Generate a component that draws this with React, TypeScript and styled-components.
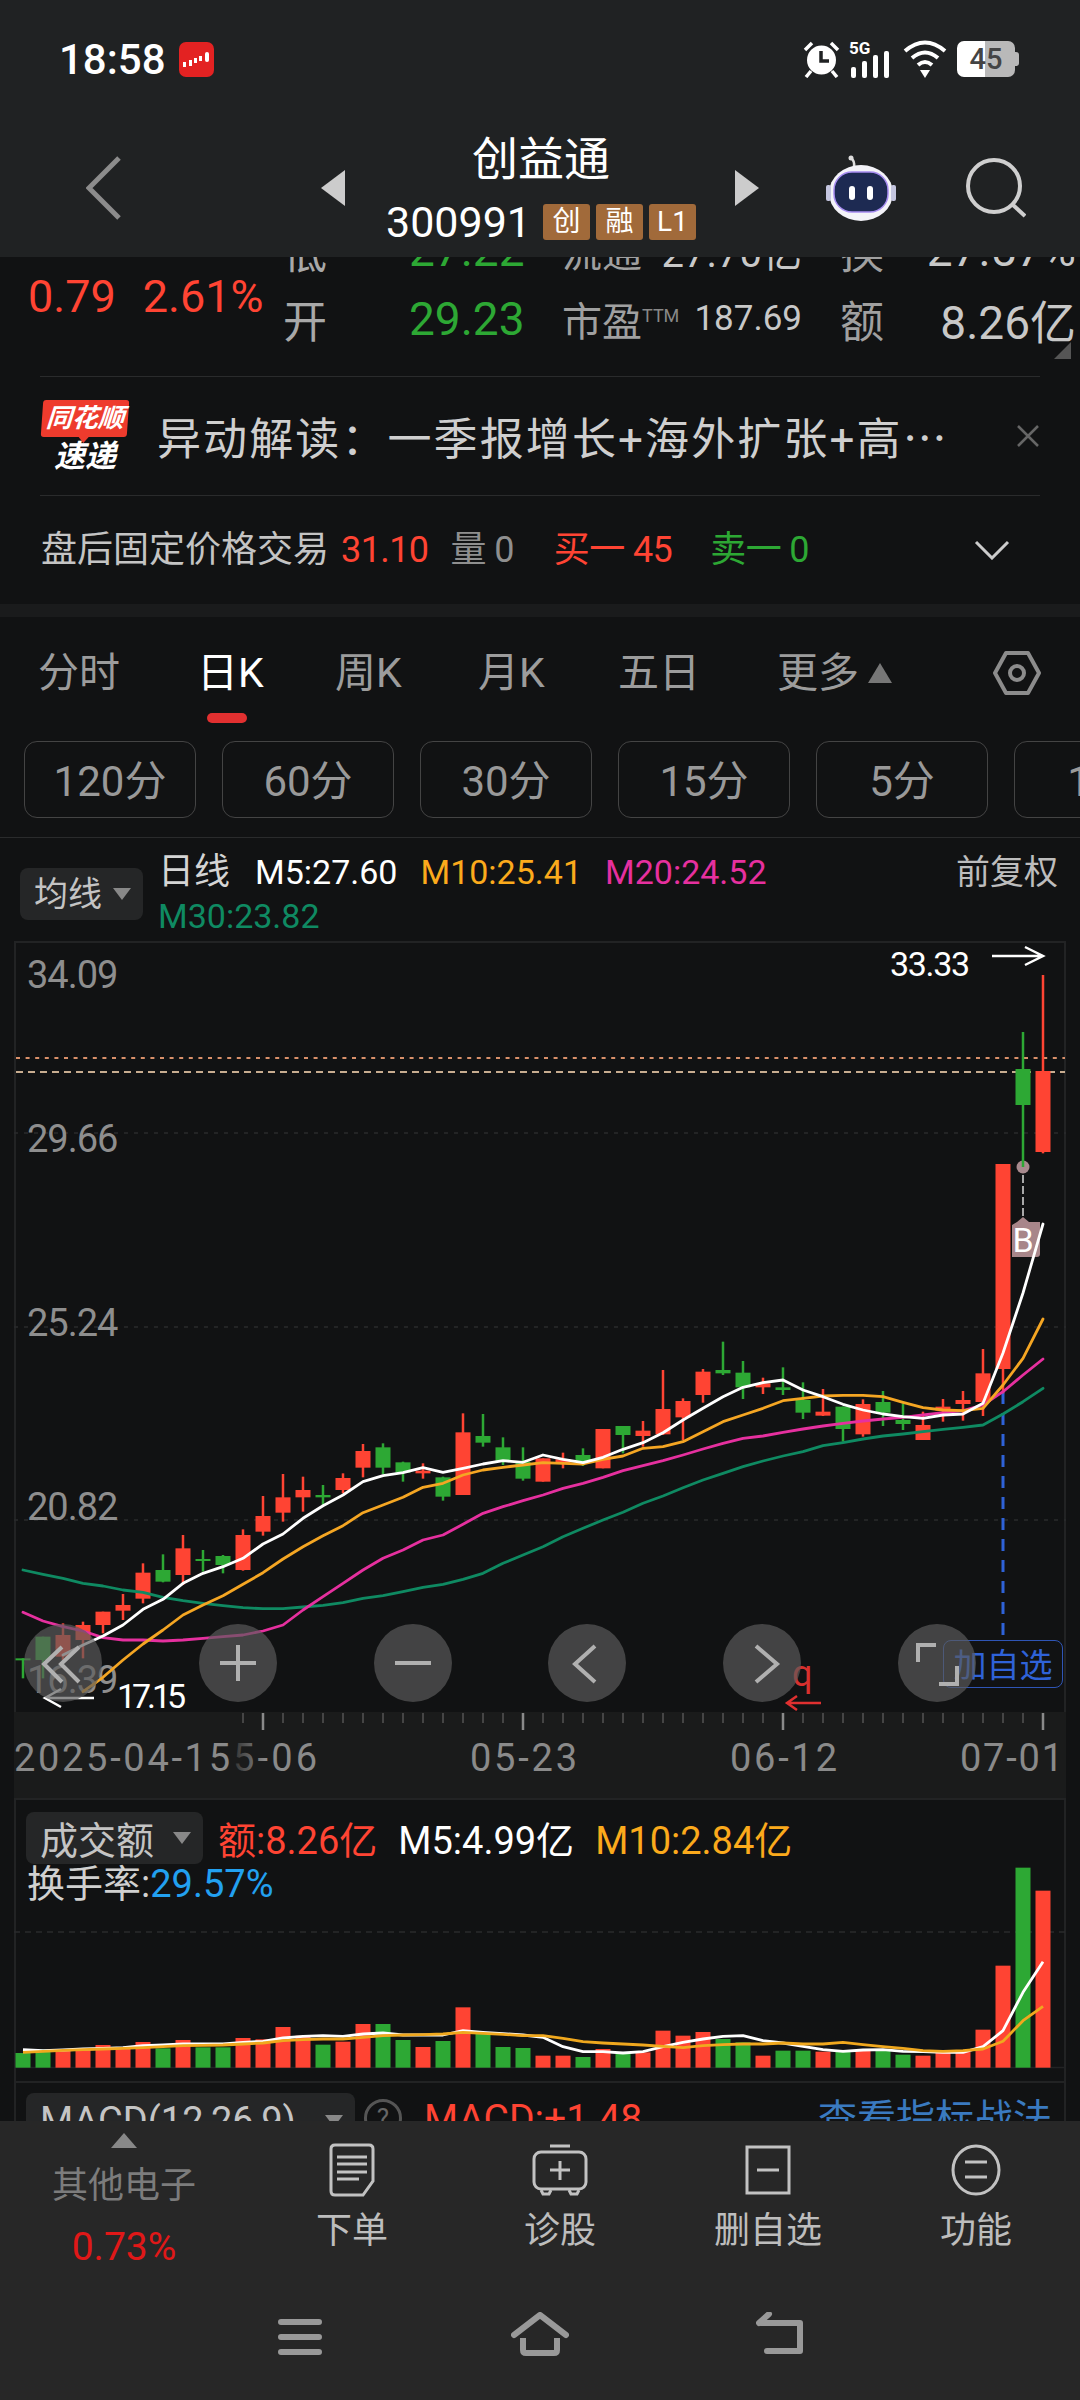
import React from "react";
import styled, { createGlobalStyle } from "styled-components";

const FONT = `Roboto, "Noto Sans CJK SC", sans-serif`;
const RED = "#ff4433";
const GREEN = "#2da834";
const ORANGE = "#fbaa1c";
const PINK = "#e6309f";
const TEAL = "#0f8a62";

const GlobalStyle = createGlobalStyle`
  html, body {
    margin: 0;
    width: 1080px;
    height: 2400px;
    background: #111213;
    font-family: ${FONT};
    color: #ccc;
  }
  * { box-sizing: border-box; }
`;

const Page = styled.div`
  width: 1080px;
  height: 2400px;
  display: flex;
  flex-direction: column;
  overflow: hidden;
`;

/* ---- header ---- */
const Header = styled.header`
  height: 257px;
  flex-shrink: 0;
  background: #202223;
  position: relative;
  z-index: 2;
`;
const StatusBar = styled.div`
  height: 118px;
  display: flex;
  align-items: center;
  padding: 0 61px 0 59px;
`;
const Clock = styled.span`
  font-size: 42px;
  font-weight: 500;
  color: #fff;
  width: 120px;
`;
const StatusIcons = styled.div`
  margin-left: auto;
  display: flex;
  align-items: center;
`;
const Battery = styled.div`
  position: relative;
  width: 58px;
  height: 36px;
  margin-left: 10px;
  margin-right: 4px;
  border-radius: 7px;
  background: linear-gradient(90deg, #fff 0 48%, #b9b9b9 48% 100%);
  color: #444;
  font-size: 29px;
  font-weight: 500;
  line-height: 36px;
  text-align: center;
  &::after {
    content: "";
    position: absolute;
    right: -4px;
    top: 11px;
    width: 4px;
    height: 14px;
    border-radius: 0 3px 3px 0;
    background: #b9b9b9;
  }
`;
const NavRow = styled.div`
  height: 139px;
  display: flex;
  align-items: center;
  padding-left: 86px;
`;
const StockSwitch = styled.span<{ $dir: "left" | "right"; $gap: number }>`
  width: 0;
  height: 0;
  margin-left: ${(p) => p.$gap}px;
  border-top: 18px solid transparent;
  border-bottom: 18px solid transparent;
  ${(p) =>
    p.$dir === "left"
      ? "border-right: 24px solid #ccc;"
      : "border-left: 24px solid #ccc;"}
`;
const StockName = styled.div`
  width: 308px;
  margin-left: 42px;
  padding-top: 5px;
  display: flex;
  flex-direction: column;
  align-items: center;
`;
const StockTitle = styled.div`
  font-size: 46px;
  line-height: 50px;
  color: #fff;
`;
const CodeRow = styled.div`
  margin-top: 14px;
  display: flex;
  align-items: center;
  gap: 6px;
`;
const StockCode = styled.span`
  font-size: 43px;
  line-height: 48px;
  color: #fff;
  margin-right: 6px;
`;
const StockTag = styled.span`
  width: 47px;
  height: 36px;
  border-radius: 3px;
  background: #a16a3a;
  color: #fff;
  font-size: 28px;
  line-height: 36px;
  text-align: center;
`;

/* ---- scroll area ---- */
const Main = styled.main`
  height: 1864px;
  flex-shrink: 0;
  overflow: hidden;
`;
const Quote = styled.section`
  margin-top: -42px;
  height: 161px;
  position: relative;
  display: flex;
  padding-left: 28px;
  &::after {
    content: "";
    position: absolute;
    right: 9px;
    bottom: 17px;
    border-left: 17px solid transparent;
    border-bottom: 17px solid #555;
  }
`;
const Change = styled.div`
  width: 255px;
  padding-top: 58px;
  display: flex;
  gap: 27px;
  font-size: 45px;
  line-height: 48px;
  color: ${RED};
`;
const QuoteGrid = styled.div`
  display: grid;
  grid-template-columns: 126px 153px 278px 240px;
  grid-auto-rows: 69px;
`;
const QuoteCell = styled.div<{ $pad?: number }>`
  display: flex;
  justify-content: space-between;
  align-items: center;
  padding-right: ${(p) => p.$pad ?? 0}px;
  font-size: 44px;
  color: #a8a8a8;
`;
const QuoteLabel = styled.span<{ $size?: number }>`
  font-size: ${(p) => p.$size ?? 40}px;
  color: #a0a0a0;
  sup {
    font-size: 18px;
    vertical-align: 14px;
    line-height: 0;
    color: #888;
  }
`;
const QuoteValue = styled.span<{ $color?: string; $size?: number }>`
  font-size: ${(p) => p.$size ?? 46}px;
  color: ${(p) => p.$color ?? "#c8c8c8"};
`;
const Banner = styled.div`
  margin: 0 40px;
  height: 120px;
  border-top: 1.5px solid #2a2b2c;
  border-bottom: 1.5px solid #2a2b2c;
  display: flex;
  align-items: center;
`;
const Logo = styled.div`
  width: 88px;
  margin-left: 1px;
  flex-shrink: 0;
  display: flex;
  flex-direction: column;
  align-items: center;
  color: #fff;
  font-style: italic;
  font-weight: 700;
`;
const LogoTag = styled.div`
  position: relative;
  width: 86px;
  height: 37px;
  border-radius: 3px;
  background: #ee3b2d;
  transform: skewX(-4deg);
  font-size: 26px;
  line-height: 37px;
  text-align: center;
  &::after {
    content: "";
    position: absolute;
    left: 38px;
    bottom: -6px;
    border-left: 5px solid transparent;
    border-right: 5px solid transparent;
    border-top: 6px solid #ee3b2d;
  }
`;
const LogoWord = styled.div`
  margin-top: 5px;
  font-size: 31px;
  line-height: 30px;
`;
const BannerText = styled.div`
  margin-left: 28px;
  flex: 1;
  font-size: 44px;
  letter-spacing: 2.1px;
  color: #cfcfcf;
  white-space: nowrap;
  span {
    font-family: "Noto Sans CJK SC", sans-serif;
    letter-spacing: -8px;
  }
`;
const AfterHours = styled.div`
  height: 108px;
  display: flex;
  align-items: center;
  padding: 0 70px 0 41px;
  font-size: 36px;
  line-height: 44px;
  color: #c4c4c4;
`;
const AfterValue = styled.span<{ $color?: string; $gap?: number }>`
  margin-left: ${(p) => p.$gap ?? 0}px;
  letter-spacing: -0.6px;
  color: ${(p) => p.$color ?? "#8f8f8f"};
`;
const Band = styled.div`
  height: 13px;
  background: #1a1b1c;
`;
const Tabs = styled.nav`
  height: 124px;
  display: flex;
  align-items: center;
  padding: 0 39px 12px 38px;
`;
const Tab = styled.span<{ $active?: boolean; $width: number }>`
  position: relative;
  width: ${(p) => p.$width}px;
  font-size: 41px;
  line-height: 50px;
  color: ${(p) => (p.$active ? "#fff" : "#9c9c9c")};
  &::after {
    content: "";
    display: ${(p) => (p.$active ? "block" : "none")};
    position: absolute;
    left: 10px;
    top: 65px;
    width: 40px;
    height: 10px;
    border-radius: 5px;
    background: #e23030;
  }
`;
const MoreArrow = styled.span`
  margin-left: 9px;
  border-left: 12px solid transparent;
  border-right: 12px solid transparent;
  border-bottom: 20px solid #777;
`;
const Periods = styled.div`
  display: flex;
  gap: 26px;
  padding-left: 24px;
  height: 77px;
  overflow: hidden;
`;
const Period = styled.span`
  flex-shrink: 0;
  width: 172px;
  height: 77px;
  border: 1.5px solid #444;
  border-radius: 13px;
  font-size: 42px;
  line-height: 79px;
  text-align: center;
  color: #999;
`;
const Legend = styled.div`
  margin-top: 19px;
  height: 104px;
  border-top: 1.5px solid #2a2b2c;
  padding: 12px 22px 0 20px;
  display: grid;
  grid-template-columns: 138px 1fr auto;
  grid-auto-rows: 44px;
  font-size: 34px;
  line-height: 44px;
`;
const Dropdown = styled.div<{ $size: number; $width: number; $height?: number }>`
  width: ${(p) => p.$width}px;
  height: ${(p) => p.$height ?? p.$size + 18}px;
  display: flex;
  align-items: center;
  justify-content: space-between;
  padding: 0 12px 0 14px;
  border-radius: 8px;
  background: #252627;
  font-size: ${(p) => p.$size}px;
  color: #c4c4c4;
  flex-shrink: 0;
  &::after {
    content: "";
    border-left: 9px solid transparent;
    border-right: 9px solid transparent;
    border-top: 12px solid #888;
  }
`;
const LegendDropdown = styled(Dropdown)`
  grid-row: 1 / span 2;
  align-self: center;
`;
const LegendLine = styled.div`
  display: flex;
  gap: 23px;
`;
const LegendTitle = styled.span`
  font-size: 36px;
  color: #d4d4d4;
  margin-right: 2px;
`;
const Ma = styled.span<{ $color: string; $gap?: number }>`
  color: ${(p) => p.$color};
  margin-left: ${(p) => p.$gap ?? 0}px;
`;

/* ---- charts ---- */
const ChartPanel = styled.div`
  position: relative;
  margin: 0 14px;
  height: 771px;
  box-shadow: inset 2px 0 #222324, inset -2px 0 #222324, inset 0 2px #222324;
  svg {
    display: block;
  }
`;
const ToolButtons = styled.div`
  position: absolute;
  left: 10px;
  top: 683px;
  width: 952px;
  display: flex;
  justify-content: space-between;
`;
const ToolButton = styled.button`
  width: 78px;
  height: 78px;
  padding: 0;
  border: 0;
  border-radius: 50%;
  background: rgba(92, 92, 92, 0.68);
  svg {
    fill: none;
    stroke: #b0b0b0;
    stroke-width: 4;
  }
`;
const AddWatch = styled.div`
  position: absolute;
  right: 3px;
  top: 699px;
  width: 120px;
  height: 48px;
  border: 1.5px solid #2f55b5;
  border-radius: 8px;
  color: #2f62d8;
  font-size: 33px;
  line-height: 49px;
  text-align: center;
`;
const AxisPanel = styled.div`
  margin: 0 14px;
  height: 86px;
  background: #1a1b1b;
  svg {
    display: block;
  }
`;
const VolumePanel = styled.div`
  position: relative;
  margin: 0 14px;
  height: 283px;
  padding: 12px 0 0 12px;
  box-shadow: inset 2px 0 #222324, inset -2px 0 #222324, inset 0 2px #222324;
  font-size: 38px;
`;
const VolumeBars = styled.svg`
  position: absolute;
  left: 0;
  top: 0;
  display: block;
`;
const VolumeLine = styled.div`
  position: relative;
  display: flex;
  align-items: center;
  gap: 21px;
`;
const TurnoverLine = styled.div`
  position: relative;
  font-size: 38px;
  line-height: 38px;
  margin-left: 1px;
  color: #d0d0d0;
`;
const MacdPanel = styled.div`
  height: 100px;
  margin: 0 14px;
  padding: 12px 14px 0 12px;
  display: flex;
  box-shadow: inset 2px 0 #222324, inset -2px 0 #222324, inset 0 2px #222324;
  font-size: 39px;
  line-height: 52px;
`;
const Help = styled.span`
  width: 38px;
  height: 38px;
  margin: 6px 22px 0 9px;
  border: 3px solid #555;
  border-radius: 50%;
  color: #666;
  font-size: 26px;
  line-height: 32px;
  text-align: center;
`;
const MacdLink = styled.span`
  margin-left: auto;
  color: #3a7ac0;
  font-size: 39px;
`;

/* ---- bottom bar ---- */
const BottomBar = styled.footer`
  height: 279px;
  flex-shrink: 0;
  background: #272727;
  position: relative;
  z-index: 2;
`;
const Actions = styled.div`
  display: grid;
  grid-template-columns: 248px repeat(4, 208px);
  height: 168px;
`;
const Sector = styled.div`
  padding-top: 12px;
  display: flex;
  flex-direction: column;
  align-items: center;
`;
const SectorArrow = styled.span`
  border-left: 13px solid transparent;
  border-right: 13px solid transparent;
  border-bottom: 15px solid #888;
`;
const SectorName = styled.span`
  margin-top: 13px;
  font-size: 36px;
  line-height: 50px;
  color: #7c7c7c;
`;
const SectorChange = styled.span`
  margin-top: 11px;
  font-size: 39px;
  line-height: 50px;
  color: #e01818;
`;
const Action = styled.div`
  padding-top: 18px;
  display: flex;
  flex-direction: column;
  align-items: center;
  svg {
    display: block;
    fill: none;
    stroke: #c2c2c2;
    stroke-width: 3;
  }
`;
const ActionIcon = styled.div`
  height: 62px;
  display: flex;
  align-items: center;
`;
const ActionLabel = styled.span`
  margin-top: 5px;
  font-size: 36px;
  line-height: 50px;
  color: #bdbdbd;
`;
const SystemNav = styled.div`
  display: grid;
  grid-template-columns: repeat(3, 240px);
  justify-content: center;
  justify-items: center;
  padding-top: 20px;
  svg {
    display: block;
    fill: none;
    stroke: #999;
    stroke-width: 6;
  }
`;

/* sampled from the 3x crops: y units are thirds of a pixel, 0 at y = 1340 */
const chartY = (v: number) => 1340 + v / 3;
/* same for the volume pane, 0 at y = 1780 */
const volY = (v: number) => 1780 + v / 3;
const xAt = (i: number) => 23 + 20 * i;

// wick top, body top, body bottom, wick bottom, up day
type Candle = [number, number, number, number, boolean];
const CANDLES: Candle[] = [
  [955, 955, 961, 1015, false],
  [890, 890, 960, 1015, false],
  [850, 885, 950, 960, true],
  [845, 855, 900, 955, true],
  [815, 815, 855, 880, true],
  [762, 795, 812, 840, true],
  [670, 698, 776, 790, true],
  [643, 690, 725, 727, false],
  [585, 625, 705, 735, true],
  [630, 657, 663, 695, false],
  [645, 648, 675, 700, false],
  [568, 585, 690, 692, true],
  [468, 528, 575, 587, true],
  [402, 472, 518, 545, true],
  [410, 450, 472, 515, true],
  [435, 465, 472, 495, false],
  [400, 414, 450, 460, true],
  [312, 333, 383, 412, true],
  [310, 322, 383, 402, false],
  [365, 367, 398, 425, false],
  [370, 392, 400, 416, true],
  [410, 412, 470, 482, false],
  [220, 277, 465, 465, true],
  [222, 288, 308, 320, false],
  [292, 322, 365, 375, false],
  [322, 365, 416, 422, false],
  [355, 355, 425, 425, true],
  [338, 358, 372, 385, true],
  [325, 345, 368, 378, false],
  [267, 267, 385, 385, true],
  [258, 258, 285, 340, false],
  [243, 272, 288, 320, true],
  [90, 207, 283, 285, true],
  [175, 183, 232, 300, true],
  [87, 95, 165, 188, true],
  [5, 90, 100, 105, false],
  [63, 98, 142, 177, false],
  [113, 130, 142, 162, true],
  [82, 142, 150, 165, false],
  [127, 180, 218, 237, false],
  [147, 215, 227, 228, true],
  [200, 200, 267, 305, false],
  [178, 192, 283, 290, true],
  [153, 186, 218, 258, false],
  [190, 240, 252, 270, false],
  [215, 255, 300, 300, true],
  [177, 200, 212, 245, true],
  [153, 180, 192, 242, true],
  [27, 100, 186, 228, true],
  [-528, -528, 87, 160, true],
  [-924, -813, -705, -519, false],
  [-1095, -807, -564, -560, true],
];

const MA5 = [
  945, 915, 888, 855, 808, 778, 730, 700, 680, 655, 612, 582, 535, 497, 465, 425, 407, 398,
  383, 397, 385, 372, 362, 367, 345, 358, 368, 352, 328, 308, 278, 240, 205, 170, 142, 128,
  120, 150, 170, 193, 210, 222, 230, 235, 225, 222, 190, 39, -141, -348,
];
const MA10 = [
  1055, 1012, 960, 912, 870, 825, 795, 767, 733, 698, 657, 620, 587, 557, 518, 495, 472, 442,
  430, 405, 390, 382, 375, 368, 370, 372, 358, 348, 325, 320, 305, 275, 245, 225, 205, 182,
  175, 168, 166, 166, 170, 187, 203, 210, 212, 205, 135, 55, -63,
];
const MA20 = [
  817, 843, 860, 873, 893, 900, 900, 903, 900, 895, 890, 885, 873, 855, 810, 770, 730, 690,
  655, 630, 600, 585, 553, 520, 500, 482, 465, 445, 430, 412, 392, 377, 362, 345, 327, 310,
  295, 288, 277, 267, 258, 250, 243, 237, 232, 225, 218, 212, 195, 155, 105, 57,
];
const MA30 = [
  690, 703, 715, 730, 738, 750, 757, 772, 782, 790, 797, 803, 806, 806, 801, 796, 788, 775,
  767, 755, 742, 733, 718, 700, 670, 645, 620, 590, 565, 540, 517, 490, 468, 443, 420, 400,
  380, 363, 348, 335, 317, 308, 297, 288, 282, 275, 268, 262, 255, 222, 185, 145,
];
const VOLUMES = [
  822, 812, 815, 810, 798, 808, 789, 808, 783, 805, 805, 777, 781, 744, 770, 797, 788, 735,
  735, 783, 804, 786, 685, 765, 804, 807, 830, 830, 834, 810, 825, 820, 755, 770, 759, 780,
  790, 830, 815, 815, 818, 818, 815, 810, 827, 830, 818, 818, 752, 560, 266, 335,
];
const VOL_MA5 = [
  812, 815, 813, 810, 808, 806, 800, 798, 795, 795, 795, 790, 787, 777, 772, 770, 772, 765,
  762, 768, 768, 768, 755, 760, 764, 768, 775, 803, 818, 818, 822, 818, 803, 790, 780, 772,
  770, 785, 792, 802, 812, 817, 813, 812, 817, 818, 820, 820, 803, 755, 640, 548,
];
const VOL_MA10 = [
  820, 817, 814, 812, 810, 808, 806, 803, 800, 799, 798, 795, 792, 785, 782, 780, 780, 775,
  770, 768, 767, 765, 760, 763, 766, 770, 770, 778, 788, 792, 795, 798, 802, 806, 800, 797,
  795, 795, 792, 795, 795, 790, 797, 803, 808, 815, 817, 815, 810, 787, 725, 682,
];

const toPoints = (values: number[], start: number, toY: (v: number) => number) =>
  values.map((v, i) => `${xAt(i + start)},${toY(v).toFixed(1)}`).join(" ");

const PRICE_LABELS: [string, number][] = [
  ["34.09", 988],
  ["29.66", 1152],
  ["25.24", 1336],
  ["20.82", 1520],
  ["16.39", 1693],
];

const KLines = () => (
  <svg width="1052" height="771" viewBox="14 941 1052 771" fontFamily="Roboto, sans-serif">
    {[1133, 1327, 1520].map((y) => (
      <line key={y} x1="14" x2="1066" y1={y} y2={y} stroke="#2a2b2c" strokeWidth="1.5" strokeDasharray="4 6" />
    ))}
    <line x1="16" x2="1065" y1="1058" y2="1058" stroke="#d9906a" strokeWidth="2" strokeDasharray="4 5.6" />
    <line x1="16" x2="1065" y1="1072" y2="1072" stroke="#c8ad90" strokeWidth="2" strokeDasharray="7 5" />
    {PRICE_LABELS.map(([label, y]) => (
      <text key={label} x="27" y={y} fontSize="38" letterSpacing="-1" fill="#8e8e8e">
        {label}
      </text>
    ))}
    <line x1="1003" x2="1003" y1="1392" y2="1640" stroke="#2f62d8" strokeWidth="3" strokeDasharray="12 9" />

    <circle cx="1023" cy="1167" r="6.5" fill="#a88a8e" />
    <line x1="1023" x2="1023" y1="1175" y2="1216" stroke="#a8a8a8" strokeWidth="2" strokeDasharray="8 3" />
    <path d="M1012 1225 L1017 1222 L1023 1217 L1029 1222 L1040 1222 V1254 Q1040 1257 1037 1257 H1012 Z" fill="#a8868a" />
    <text x="1023" y="1252" fontSize="34" fill="#fff" textAnchor="middle">B</text>

    {CANDLES.map(([high, top, bottom, low, up], i) => {
      const color = up ? RED : GREEN;
      return (
        <g key={i} fill={color}>
          <rect x={xAt(i) - 1.25} y={chartY(high)} width="2.5" height={(low - high) / 3} />
          <rect x={xAt(i) - 7.5} y={chartY(top)} width="15" height={(bottom - top) / 3} />
        </g>
      );
    })}

    <g fill="none" strokeWidth="2.8" strokeLinejoin="round" strokeLinecap="round">
      <polyline points={toPoints(MA30, 0, chartY)} stroke={TEAL} />
      <polyline points={toPoints(MA20, 0, chartY)} stroke={PINK} />
      <polyline points={toPoints(MA10, 3, chartY)} stroke="#f5a623" />
      <polyline points={toPoints(MA5, 2, chartY)} stroke="#fff" />
    </g>

    <text x="890" y="976" fontSize="34" fill="#fff" textLength="80">33.33</text>
    <path d="M992 956 H1043 M1025 947 L1043 956 L1025 965" fill="none" stroke="#fff" strokeWidth="2.5" />
    <text x="117" y="1708" fontSize="34" fill="#fff" textLength="69">17.15</text>
    <path d="M94 1698 H45 M61 1689 L45 1698 L61 1707" fill="none" stroke="#fff" strokeWidth="2.5" />
    <text x="792" y="1686" fontSize="36" fill="#d8302e">q</text>
    <path d="M821 1703 H787 M797 1696 L787 1703 L797 1710" fill="none" stroke="#e03030" strokeWidth="2.5" />
  </svg>
);

const DateAxis = () => (
  <svg width="1052" height="86" viewBox="14 1712 1052 86" fontFamily="Roboto, sans-serif">
    <defs>
      <linearGradient id="axisFade" x1="0" x2="1" y1="0" y2="0">
        <stop offset="0" stopColor="#1a1b1b" />
        <stop offset="1" stopColor="#1a1b1b" stopOpacity="0" />
      </linearGradient>
    </defs>
    {Array.from({ length: 41 }, (_, k) => {
      const i = k + 11;
      const major = (i - 12) % 13 === 0;
      return (
        <line
          key={i}
          x1={xAt(i)}
          x2={xAt(i)}
          y1="1713"
          y2={major ? 1730 : 1723}
          stroke={major ? "#8a8a8a" : "#555"}
          strokeWidth={major ? 2.5 : 1.5}
        />
      );
    })}
    <text x="233" y="1771" fontSize="38" fill="#8a8a8a" textLength="84">5-06</text>
    <rect x="225" y="1735" width="40" height="45" fill="url(#axisFade)" />
    <text x="14" y="1771" fontSize="38" fill="#8a8a8a" textLength="216">2025-04-15</text>
    <text x="470" y="1771" fontSize="38" fill="#8a8a8a" textLength="107">05-23</text>
    <text x="730" y="1771" fontSize="38" fill="#8a8a8a" textLength="107">06-12</text>
    <text x="960" y="1771" fontSize="38" fill="#8a8a8a" textLength="103">07-01</text>
  </svg>
);

const VolumeChart = () => (
  <VolumeBars width="1052" height="283" viewBox="14 1799 1052 283">
    <line x1="14" x2="1066" y1="1933" y2="1933" stroke="#2a2b2c" strokeWidth="1.5" strokeDasharray="6 5" />
    <line x1="14" x2="1066" y1="2068.5" y2="2068.5" stroke="#222324" strokeWidth="1.5" />
    {VOLUMES.map((v, i) => (
      <rect
        key={i}
        x={xAt(i) - 7.5}
        y={volY(v)}
        width="15"
        height={(866 - v) / 3}
        fill={CANDLES[i][4] ? RED : GREEN}
      />
    ))}
    <g fill="none" strokeWidth="2.8" strokeLinejoin="round">
      <polyline points={toPoints(VOL_MA5, 0, volY)} stroke="#fff" />
      <polyline points={toPoints(VOL_MA10, 0, volY)} stroke="#f0a81e" />
    </g>
  </VolumeBars>
);

const AppIcon = () => (
  <svg width="35" height="35" viewBox="0 0 35 35" style={{ display: "block" }}>
    <rect width="35" height="35" rx="7" fill="#e32222" />
    <g fill="#fff">
      <rect x="4" y="20" width="3" height="5" />
      <rect x="10" y="18" width="3" height="6" />
      <rect x="15" y="16" width="3" height="5" />
      <rect x="20" y="14" width="3" height="5" />
      <rect x="26" y="10" width="4" height="10" rx="2" />
    </g>
  </svg>
);

const StatusGlyphs = () => (
  <>
    <svg width="37" height="38" viewBox="0 0 37 38">
      <circle cx="18.5" cy="20" r="14.5" fill="#fff" />
      <path d="M18 11 V21 H26" fill="none" stroke="#202223" strokeWidth="3.5" />
      <path d="M2 10 L9 3 M35 10 L28 3 M8 31 L3 37 M29 31 L34 37" stroke="#fff" strokeWidth="3.5" fill="none" />
    </svg>
    <svg width="44" height="38" viewBox="0 0 44 38" style={{ marginLeft: 9 }}>
      <text x="0" y="14" fontSize="17" fontWeight="700" fill="#fff" fontFamily="Roboto, sans-serif">5G</text>
      <g fill="#fff">
        <rect x="2" y="27" width="5" height="11" rx="2" />
        <rect x="13" y="21" width="5" height="17" rx="2" />
        <rect x="24" y="15" width="5" height="23" rx="2" />
        <rect x="35" y="11" width="5" height="27" rx="2" />
      </g>
    </svg>
    <svg width="44" height="38" viewBox="0 0 44 38" style={{ marginLeft: 10 }}>
      <g fill="none" stroke="#fff" strokeWidth="4">
        <path d="M2 11 Q22 -6 42 11" />
        <path d="M9 18 Q22 7 35 18" />
        <path d="M15 25 Q22 19 29 25" />
      </g>
      <path d="M17 30 H27 L22 38 Z" fill="#fff" />
    </svg>
  </>
);

const RobotIcon = () => (
  <svg width="72" height="66" viewBox="0 0 72 66" style={{ marginLeft: 66 }}>
    <path d="M29 12 Q30 6 26 3" fill="none" stroke="#ddd" strokeWidth="2.5" />
    <circle cx="26" cy="3" r="2.5" fill="#ddd" />
    <ellipse cx="36" cy="38" rx="32" ry="28" fill="#f3f3f8" />
    <rect x="1" y="30" width="5" height="16" rx="2" fill="#c4c6e0" />
    <rect x="66" y="30" width="5" height="16" rx="2" fill="#c4c6e0" />
    <rect x="9" y="17" width="54" height="40" rx="18" fill="#1d2a52" stroke="#a68cf0" strokeWidth="1.5" />
    <rect x="24" y="31" width="6" height="14" rx="3" fill="#fff" />
    <rect x="42" y="31" width="6" height="14" rx="3" fill="#fff" />
  </svg>
);

const MiniChevron = ({ d }: { d: string }) => (
  <svg width="78" height="78" viewBox="0 0 78 78" style={{ display: "block" }}>
    <path d={d} />
  </svg>
);

const PERIODS = ["120分", "60分", "30分", "15分", "5分", "1分"];

const TOOLS = [
  "M38 23 L20 40 L38 58 M55 23 L37 40 L55 58",
  "M21 39 H57 M39 21 V57",
  "M21 39 H57",
  "M47 22 L27 40 L47 58",
  "M33 22 L54 40 L33 58",
  "M20 38 V21 H38 M41 60 H59 V42",
];

export default function App() {
  return (
    <Page>
      <GlobalStyle />
      <Header>
        <StatusBar>
          <Clock>18:58</Clock>
          <AppIcon />
          <StatusIcons>
            <StatusGlyphs />
            <Battery>45</Battery>
          </StatusIcons>
        </StatusBar>
        <NavRow>
          <svg width="35" height="64" viewBox="0 0 35 64">
            <path d="M33 2 L3 32 L33 62" fill="none" stroke="#8c8c8c" strokeWidth="5" />
          </svg>
          <StockSwitch $dir="left" $gap={200} />
          <StockName>
            <StockTitle>创益通</StockTitle>
            <CodeRow>
              <StockCode>300991</StockCode>
              <StockTag>创</StockTag>
              <StockTag>融</StockTag>
              <StockTag>L1</StockTag>
            </CodeRow>
          </StockName>
          <StockSwitch $dir="right" $gap={40} />
          <RobotIcon />
          <svg width="60" height="60" viewBox="0 0 60 60" style={{ marginLeft: 69 }}>
            <circle cx="28" cy="28" r="26" fill="none" stroke="#cfcfcf" strokeWidth="4" />
            <path d="M47 47 L59 58" stroke="#cfcfcf" strokeWidth="4" />
          </svg>
        </NavRow>
      </Header>

      <Main>
        <Quote>
          <Change>
            <span>0.79</span>
            <span>2.61%</span>
          </Change>
          <QuoteGrid>
            <QuoteCell>低</QuoteCell>
            <QuoteCell>
              <QuoteValue $color={GREEN}>27.22</QuoteValue>
            </QuoteCell>
            <QuoteCell $pad={38}>
              <QuoteLabel>流通</QuoteLabel>
              <QuoteValue $size={40}>27.70亿</QuoteValue>
            </QuoteCell>
            <QuoteCell $pad={4}>
              <QuoteLabel $size={44}>换</QuoteLabel>
              <QuoteValue>27.57%</QuoteValue>
            </QuoteCell>
            <QuoteCell>开</QuoteCell>
            <QuoteCell>
              <QuoteValue $color={GREEN}>29.23</QuoteValue>
            </QuoteCell>
            <QuoteCell $pad={38}>
              <QuoteLabel>
                市盈<sup>TTM</sup>
              </QuoteLabel>
              <QuoteValue $size={35}>187.69</QuoteValue>
            </QuoteCell>
            <QuoteCell $pad={4}>
              <QuoteLabel $size={44}>额</QuoteLabel>
              <QuoteValue>8.26亿</QuoteValue>
            </QuoteCell>
          </QuoteGrid>
        </Quote>

        <Banner>
          <Logo>
            <LogoTag>同花顺</LogoTag>
            <LogoWord>速递</LogoWord>
          </Logo>
          <BannerText>
            异动解读：一季报增长+海外扩张+高<span>…</span>
          </BannerText>
          <svg width="24" height="24" viewBox="0 0 24 24">
            <path d="M2 2 L22 22 M22 2 L2 22" stroke="#666" strokeWidth="2.5" />
          </svg>
        </Banner>

        <AfterHours>
          盘后固定价格交易
          <AfterValue $color={RED} $gap={12}>31.10</AfterValue>
          <AfterValue $gap={22}>量 0</AfterValue>
          <AfterValue $color={RED} $gap={40}>买一 45</AfterValue>
          <AfterValue $color={GREEN} $gap={38}>卖一 0</AfterValue>
          <svg width="36" height="20" viewBox="0 0 36 20" style={{ marginLeft: "auto" }}>
            <path d="M2 2 L18 18 L34 2" fill="none" stroke="#ccc" strokeWidth="3" />
          </svg>
        </AfterHours>
        <Band />

        <Tabs>
          <Tab $width={159}>分时</Tab>
          <Tab $width={138} $active>日K</Tab>
          <Tab $width={143}>周K</Tab>
          <Tab $width={140}>月K</Tab>
          <Tab $width={159}>五日</Tab>
          <Tab $width={82}>更多</Tab>
          <MoreArrow />
          <svg width="48" height="46" viewBox="0 0 48 46" style={{ marginLeft: "auto" }}>
            <path d="M13 3 H35 L46 23 L35 43 H13 L2 23 Z" fill="none" stroke="#8c8c8c" strokeWidth="4" strokeLinejoin="round" />
            <circle cx="24" cy="23" r="7" fill="none" stroke="#8c8c8c" strokeWidth="4" />
          </svg>
        </Tabs>

        <Periods>
          {PERIODS.map((p) => (
            <Period key={p}>{p}</Period>
          ))}
        </Periods>

        <Legend>
          <LegendDropdown $size={34} $width={123}>均线</LegendDropdown>
          <LegendLine>
            <LegendTitle>日线</LegendTitle>
            <Ma $color="#fff">M5:27.60</Ma>
            <Ma $color={ORANGE}>M10:25.41</Ma>
            <Ma $color={PINK}>M20:24.52</Ma>
          </LegendLine>
          <Ma $color="#bdbdbd">前复权</Ma>
          <Ma $color={TEAL}>M30:23.82</Ma>
        </Legend>

        <ChartPanel>
          <KLines />
          <AddWatch>加自选</AddWatch>
          <ToolButtons>
            {TOOLS.map((d) => (
              <ToolButton key={d}>
                <MiniChevron d={d} />
              </ToolButton>
            ))}
          </ToolButtons>
        </ChartPanel>
        <AxisPanel>
          <DateAxis />
        </AxisPanel>

        <VolumePanel>
          <VolumeChart />
          <VolumeLine>
            <Dropdown $size={38} $width={177} $height={52}>成交额</Dropdown>
            <Ma $color={RED} $gap={-6}>额:8.26亿</Ma>
            <Ma $color="#fff">M5:4.99亿</Ma>
            <Ma $color={ORANGE}>M10:2.84亿</Ma>
          </VolumeLine>
          <TurnoverLine>
            换手率:<Ma $color="#22a0f0">29.57%</Ma>
          </TurnoverLine>
        </VolumePanel>

        <MacdPanel>
          <Dropdown $size={38} $width={329} $height={56}>MACD(12,26,9)</Dropdown>
          <Help>?</Help>
          <Ma $color={RED}>MACD:+1.48</Ma>
          <MacdLink>查看指标战法</MacdLink>
        </MacdPanel>
      </Main>

      <BottomBar>
        <Actions>
          <Sector>
            <SectorArrow />
            <SectorName>其他电子</SectorName>
            <SectorChange>0.73%</SectorChange>
          </Sector>
          <Action>
            <ActionIcon>
              <svg width="46" height="54" viewBox="0 0 46 54">
                <path d="M6 2 H40 Q44 2 44 6 V38 L34 52 H6 Q2 52 2 48 V6 Q2 2 6 2 Z" />
                <path d="M8 14 H38 M8 21 H38 M8 29 H38 M8 36 H30" />
              </svg>
            </ActionIcon>
            <ActionLabel>下单</ActionLabel>
          </Action>
          <Action>
            <ActionIcon>
              <svg width="56" height="52" viewBox="0 0 56 52">
                <path d="M18 2 H38" />
                <rect x="2" y="8" width="52" height="37" rx="7" />
                <path d="M28 17 V36 M18 26 H38" />
                <path d="M9 46 L11 50 H17 L19 46 M37 46 L39 50 H45 L47 46" />
              </svg>
            </ActionIcon>
            <ActionLabel>诊股</ActionLabel>
          </Action>
          <Action>
            <ActionIcon>
              <svg width="46" height="50" viewBox="0 0 46 50">
                <rect x="2" y="2" width="42" height="46" />
                <path d="M12 25 H34" />
              </svg>
            </ActionIcon>
            <ActionLabel>删自选</ActionLabel>
          </Action>
          <Action>
            <ActionIcon>
              <svg width="50" height="52" viewBox="0 0 50 52">
                <ellipse cx="25" cy="26" rx="23" ry="24" />
                <path d="M14 18 H36 M14 33 H36" />
              </svg>
            </ActionIcon>
            <ActionLabel>功能</ActionLabel>
          </Action>
        </Actions>
        <SystemNav>
          <svg width="44" height="36" viewBox="0 0 44 36" style={{ marginTop: 10 }}>
            <path d="M3 3 H41 M3 18 H41 M3 33 H41" strokeLinecap="round" />
          </svg>
          <svg width="58" height="44" viewBox="0 0 58 44" style={{ marginTop: 3 }}>
            <path d="M3 23 L29 3 L55 23" strokeLinejoin="round" strokeLinecap="round" />
            <path d="M12 26 V38 Q12 41 15 41 H43 Q46 41 46 38 V26" />
          </svg>
          <svg width="48" height="44" viewBox="0 0 48 44" style={{ marginTop: 3 }}>
            <path d="M5 11 H44 V39 H11" strokeLinejoin="round" strokeLinecap="round" />
            <path d="M13 2 L3 11" strokeLinecap="round" />
          </svg>
        </SystemNav>
      </BottomBar>
    </Page>
  );
}
